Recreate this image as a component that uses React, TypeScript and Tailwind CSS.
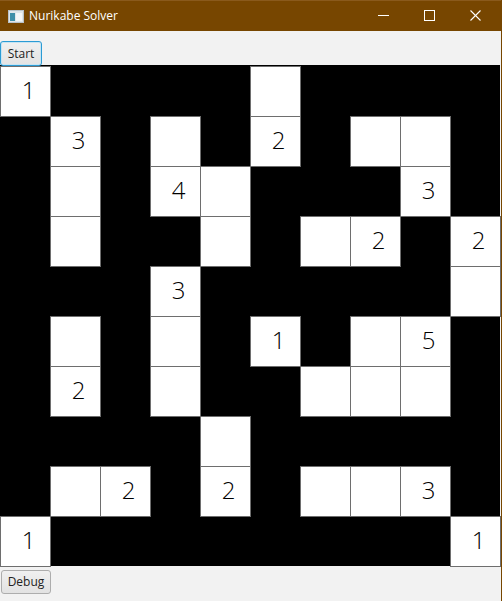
import React from "react";

const grid: (string | null | "")[][] = [
  ["1", null, null, null, null, "", null, null, null, null],
  [null, "3", null, "", null, "2", null, "", "", null],
  [null, "", null, "4", "", null, null, null, "3", null],
  [null, "", null, null, "", null, "", "2", null, "2"],
  [null, null, null, "3", null, null, null, null, null, ""],
  [null, "", null, "", null, "1", null, "", "5", null],
  [null, "2", null, "", null, null, "", "", "", null],
  [null, null, null, null, "", null, null, null, null, null],
  [null, "", "2", null, "2", null, "", "", "3", null],
  ["1", null, null, null, null, null, null, null, null, "1"],
];

export default function App() {
  return (
    <div
      className="relative w-[502px] h-[601px] bg-[#f2f2f2] overflow-hidden border-r border-[#774600]"
      style={{ fontFamily: '"Open Sans", "Noto Sans", sans-serif' }}
    >
      {/* title bar */}
      <div className="h-[31px] bg-[#774600] border-t border-[#8a5a1c] flex items-center text-white">
        <svg width="16" height="13" viewBox="0 0 16 13" className="ml-[8px]">
          <rect x="0.5" y="0.5" width="15" height="12" fill="#dfe6ea" stroke="#b9c2c8" />
          <rect x="2" y="3" width="5" height="8" fill="#3f8fa8" />
          <rect x="8" y="3" width="6" height="8" fill="#f4f6f7" />
        </svg>
        <span className="ml-[5px] text-[12px] leading-none mt-[-1px]">Nurikabe Solver</span>
        <div className="flex-1" />
        <svg width="12" height="12" viewBox="0 0 12 12" className="mr-[34px] mt-[-1px]">
          <line x1="0" y1="5.5" x2="11" y2="5.5" stroke="white" strokeWidth="1" />
        </svg>
        <svg width="12" height="12" viewBox="0 0 12 12" className="mr-[34px] mt-[-1px]">
          <rect x="0.5" y="0.5" width="10" height="10" fill="none" stroke="white" strokeWidth="1" />
        </svg>
        <svg width="12" height="12" viewBox="0 0 12 12" className="mr-[19px] mt-[-1px]">
          <line x1="0.5" y1="0.5" x2="10.5" y2="10.5" stroke="white" strokeWidth="1.1" />
          <line x1="10.5" y1="0.5" x2="0.5" y2="10.5" stroke="white" strokeWidth="1.1" />
        </svg>
      </div>
      {/* toolbar */}
      <div className="h-[34px] flex items-end">
        <button className="ml-0 h-[25px] w-[42px] mb-[-1px] rounded-[3px] border border-[#2b9bd4] bg-gradient-to-b from-[#f0f0f0] to-[#e3e3e3] text-[12px] text-[#222] leading-none shadow-[inset_0_0_0_1px_#c7e4f3]">
          Start
        </button>
      </div>
      {/* grid */}
      <div className="w-[500px] h-[501px] bg-black grid grid-cols-[repeat(10,50px)] grid-rows-[repeat(10,50px)] pt-px">
        {grid.flatMap((row, r) =>
          row.map((cell, c) =>
            cell === null ? (
              <div key={`${r}-${c}`} />
            ) : (
              <div
                key={`${r}-${c}`}
                className="w-[51px] h-[51px] bg-white border border-[#6e6e6e] flex items-center justify-center pl-[6px] pb-[3px] text-[24px] font-light text-black leading-none"
              >
                {cell}
              </div>
            )
          )
        )}
      </div>
      {/* bottom */}
      <div className="pt-[2px]">
        <button className="ml-px h-[24px] w-[50px] rounded-[3px] border border-[#adadad] bg-gradient-to-b from-[#f0f0f0] to-[#e2e2e2] text-[12px] text-[#222] leading-none">
          Debug
        </button>
      </div>
    </div>
  );
}
